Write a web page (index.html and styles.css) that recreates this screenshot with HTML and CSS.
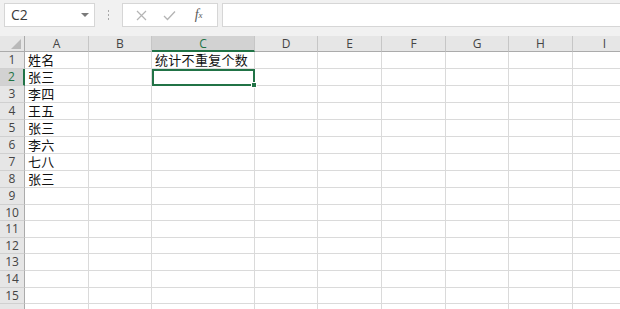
FILE: index.html
```html
<!DOCTYPE html>
<html lang="zh">
<head>
<meta charset="utf-8">
<title>Sheet</title>
<link rel="stylesheet" href="styles.css">
</head>
<body>
<div class="app">
  <div class="toolbar">
    <div class="namebox"><span class="ref">C2</span><span class="caret"></span></div>
    <div class="dots"><svg width="3" height="10" viewBox="0 0 3 10"><rect x="1" y="0" width="1" height="2" fill="#a8a8a8"/><rect x="1" y="4" width="1" height="2" fill="#a8a8a8"/><rect x="1" y="8" width="1" height="2" fill="#a8a8a8"/></svg></div>
    <div class="fbtns">
      <span class="btn"><svg width="11" height="11" viewBox="0 0 11 11"><path d="M1 1L10 10M10 1L1 10" stroke="#b4b4b4" stroke-width="1.2" fill="none"/></svg></span>
      <span class="btn"><svg width="13" height="11" viewBox="0 0 13 11"><path d="M1 6L4.5 9.5L12 1.5" stroke="#b4b4b4" stroke-width="1.3" fill="none"/></svg></span>
      <span class="btn fx"><i>f</i><sub>x</sub></span>
    </div>
    <div class="formula"></div>
  </div>
  <div class="sheet">
    <div class="h corner"><svg width="10" height="10" viewBox="0 0 10 10"><polygon points="10,0 10,10 0,10" fill="#b9b9b9"/></svg></div>
    <div class="h">A</div><div class="h">B</div><div class="h sel-h">C</div><div class="h">D</div><div class="h">E</div><div class="h">F</div><div class="h">G</div><div class="h">H</div><div class="h">I</div>

    <div class="r">1</div><div class="c">姓名</div><div class="c"></div><div class="c">统计不重复个数</div><div class="c"></div><div class="c"></div><div class="c"></div><div class="c"></div><div class="c"></div><div class="c"></div>
    <div class="r sel-r">2</div><div class="c">张三</div><div class="c"></div><div class="c active"><span class="selbox"><span class="handle"></span></span></div><div class="c"></div><div class="c"></div><div class="c"></div><div class="c"></div><div class="c"></div><div class="c"></div>
    <div class="r">3</div><div class="c">李四</div><div class="c"></div><div class="c"></div><div class="c"></div><div class="c"></div><div class="c"></div><div class="c"></div><div class="c"></div><div class="c"></div>
    <div class="r">4</div><div class="c">王五</div><div class="c"></div><div class="c"></div><div class="c"></div><div class="c"></div><div class="c"></div><div class="c"></div><div class="c"></div><div class="c"></div>
    <div class="r">5</div><div class="c">张三</div><div class="c"></div><div class="c"></div><div class="c"></div><div class="c"></div><div class="c"></div><div class="c"></div><div class="c"></div><div class="c"></div>
    <div class="r">6</div><div class="c">李六</div><div class="c"></div><div class="c"></div><div class="c"></div><div class="c"></div><div class="c"></div><div class="c"></div><div class="c"></div><div class="c"></div>
    <div class="r">7</div><div class="c">七八</div><div class="c"></div><div class="c"></div><div class="c"></div><div class="c"></div><div class="c"></div><div class="c"></div><div class="c"></div><div class="c"></div>
    <div class="r">8</div><div class="c">张三</div><div class="c"></div><div class="c"></div><div class="c"></div><div class="c"></div><div class="c"></div><div class="c"></div><div class="c"></div><div class="c"></div>
    <div class="r">9</div><div class="c"></div><div class="c"></div><div class="c"></div><div class="c"></div><div class="c"></div><div class="c"></div><div class="c"></div><div class="c"></div><div class="c"></div>
    <div class="r">10</div><div class="c"></div><div class="c"></div><div class="c"></div><div class="c"></div><div class="c"></div><div class="c"></div><div class="c"></div><div class="c"></div><div class="c"></div>
    <div class="r">11</div><div class="c"></div><div class="c"></div><div class="c"></div><div class="c"></div><div class="c"></div><div class="c"></div><div class="c"></div><div class="c"></div><div class="c"></div>
    <div class="r">12</div><div class="c"></div><div class="c"></div><div class="c"></div><div class="c"></div><div class="c"></div><div class="c"></div><div class="c"></div><div class="c"></div><div class="c"></div>
    <div class="r">13</div><div class="c"></div><div class="c"></div><div class="c"></div><div class="c"></div><div class="c"></div><div class="c"></div><div class="c"></div><div class="c"></div><div class="c"></div>
    <div class="r">14</div><div class="c"></div><div class="c"></div><div class="c"></div><div class="c"></div><div class="c"></div><div class="c"></div><div class="c"></div><div class="c"></div><div class="c"></div>
    <div class="r">15</div><div class="c"></div><div class="c"></div><div class="c"></div><div class="c"></div><div class="c"></div><div class="c"></div><div class="c"></div><div class="c"></div><div class="c"></div>
    <div class="r"></div><div class="c"></div><div class="c"></div><div class="c"></div><div class="c"></div><div class="c"></div><div class="c"></div><div class="c"></div><div class="c"></div><div class="c"></div>
  </div>
</div>
</body>
</html>
```

FILE: styles.css
```css
* { box-sizing: border-box; }
html, body { margin: 0; padding: 0; }
body {
  width: 620px;
  height: 309px;
  overflow: hidden;
  background: #ffffff;
  font-family: "Open Sans", "Noto Sans", sans-serif;
}
.app {
  width: 620px;
  height: 309px;
  overflow: hidden;
  display: flex;
  flex-direction: column;
}
.toolbar {
  height: 36px;
  flex: none;
  background: #f1f1f1;
  display: flex;
  align-items: flex-start;
  padding: 3px 0 0 4px;
}
.namebox {
  width: 91px;
  height: 24px;
  background: #fff;
  border: 1px solid #d6d6d6;
  display: flex;
  align-items: center;
  justify-content: space-between;
  padding: 0 5px 0 6px;
}
.ref {
  font-family: "Open Sans", sans-serif;
  font-size: 14px;
  color: #3a3a3a;
  line-height: 1;
}
.caret {
  width: 0;
  height: 0;
  border-left: 4px solid transparent;
  border-right: 4px solid transparent;
  border-top: 4px solid #7a7a7a;
}
.dots {
  width: 27px;
  height: 24px;
  display: flex;
  align-items: center;
  justify-content: center;
}
.fbtns {
  width: 96px;
  height: 24px;
  background: #fff;
  border: 1px solid #d6d6d6;
  display: flex;
  align-items: center;
  justify-content: space-around;
  padding: 0 4px 0 4px;
}
.btn {
  width: 24px;
  display: flex;
  align-items: center;
  justify-content: center;
}
.fx {
  font-family: "Liberation Serif", serif;
  color: #5a5a5a;
  font-size: 14px;
  line-height: 1;
}
.fx i { font-style: italic; }
.fx sub { font-size: 9px; font-style: italic; vertical-align: -2px; }
.formula {
  flex: 1;
  height: 24px;
  margin-left: 4px;
  margin-right: -3px;
  background: #fff;
  border: 1px solid #d6d6d6;
}
.sheet {
  flex: none;
  display: grid;
  grid-template-columns: 25px 64px 63px 103px 63px 64px 64px 63px 64px 64px;
  grid-template-rows: 16px repeat(9, 17px) 16px 17px 16px 17px 17px 16px 17px;
  width: 640px;
}
.h {
  background: #e6e6e6;
  border-right: 1px solid #c6c6c6;
  border-bottom: 1px solid #ababab;
  color: #444;
  font-size: 12px;
  line-height: 15px;
  text-align: center;
}
.corner {
  display: flex;
  align-items: flex-end;
  justify-content: flex-end;
  padding: 0 3px 2px 0;
  border-right: 1px solid #ababab;
}
.sel-h {
  background: #d2d2d2;
  color: #217346;
  border-bottom: 2px solid #217346;
}
.r {
  background: #e6e6e6;
  border-right: 1px solid #ababab;
  border-bottom: 1px solid #d0d0d0;
  color: #444;
  font-size: 12px;
  line-height: 16px;
  text-align: center;
  overflow: hidden;
}
.sel-r {
  background: #d2d2d2;
  color: #217346;
  border-right: 2px solid #217346;
}
.c {
  border-right: 1px solid #dadada;
  border-bottom: 1px solid #dadada;
  font-family: "Noto Sans CJK SC", "Noto Sans", sans-serif;
  font-size: 13px;
  line-height: 16px;
  color: #111;
  white-space: nowrap;
  padding-left: 3px;
  display: flex;
  align-items: flex-end;
  letter-spacing: 0.3px;
}
.active { position: relative; }
.selbox {
  position: absolute;
  left: 0;
  top: 0;
  right: -1px;
  bottom: -1px;
  border: 2px solid #217346;
}
.handle {
  position: absolute;
  right: -4px;
  bottom: -4px;
  width: 6px;
  height: 6px;
  background: #217346;
  border: 1px solid #fff;
}
```
